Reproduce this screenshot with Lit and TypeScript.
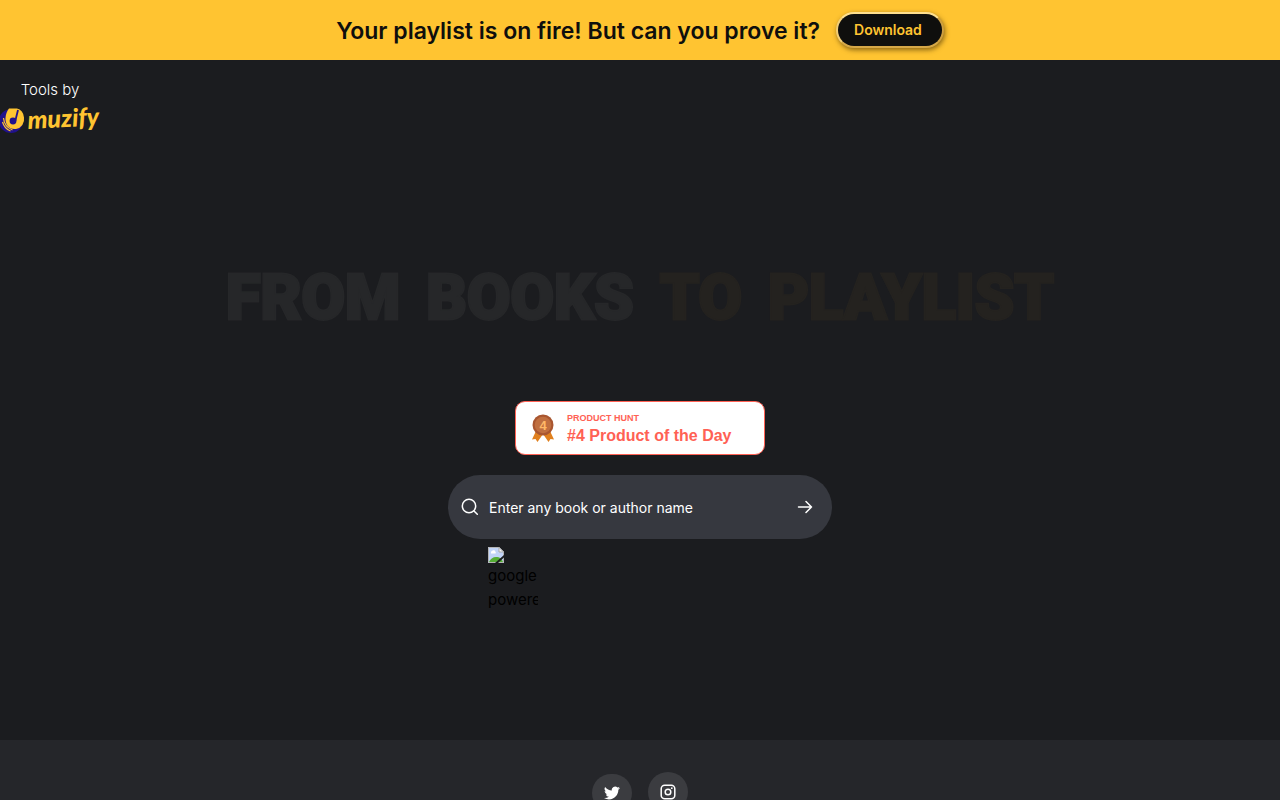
import { LitElement, html, css } from "lit";
import { customElement } from "lit/decorators.js";

@customElement("app-root")
export class AppRoot extends LitElement {
  static styles = css`
    :host {
      display: block;
      min-height: 100vh;
      background: #1b1c1f;
      color: #fff;
      font-family: Inter, "Noto Sans", sans-serif;
      font-size: 16px;
      line-height: 24px;
    }
    * { box-sizing: border-box; }
    .banner {
      display: flex;
      align-items: center;
      justify-content: center;
      gap: 16px;
      height: 60px;
      background: #ffc431;
      color: #0f0f0d;
    }
    .slogan { margin: 0; padding-top: 2px; font-size: 23px; line-height: 32px; font-weight: 600; }
    .download {
      height: 36px;
      padding: 0 20px 0 16px;
      border: 2px solid;
      border-color: #ffe08e #cfa040 #d6a847 #f3cf77;
      border-radius: 18px;
      background: #0f0f0d;
      color: #ffc431;
      box-shadow: 1px 2px 5px rgba(60, 40, 0, 0.6);
      font: 600 14px/20px Inter, sans-serif;
    }
    main { min-height: 85vh; }
    .brand {
      display: block;
      width: 100px;
      padding-top: 18px;
      color: #fff;
      text-align: center;
      text-decoration: none;
      font-size: 15px;
      font-weight: 300;
    }
    .brand span { display: block; line-height: 24px; }
    .logo { display: block; width: 100px; height: 38px; overflow: visible; }
    .wordmark {
      fill: #ffc431;
      font: italic 900 25px Lato, sans-serif;
    }
    .hero { display: flex; flex-direction: column; align-items: center; }
    h1 {
      display: flex;
      flex-wrap: wrap;
      justify-content: center;
      column-gap: 26px;
      margin: 118px 0 0;
      font: 900 63px/80px Roboto, sans-serif;
      color: #262729;
      -webkit-text-stroke: 3px currentColor;
      paint-order: stroke fill;
    }
    .warm { color: #24221f; }
    .award {
      display: flex;
      align-items: center;
      width: 250px;
      height: 54px;
      margin-top: 63px;
      padding-left: 15px;
      gap: 14px;
      border: 1px solid #ff6154;
      border-radius: 10px;
      background: #fff;
      color: #ff6154;
      font-family: "Liberation Sans", Arial, sans-serif;
      font-weight: 700;
      text-decoration: none;
    }
    .award svg { width: 24px; height: 30px; }
    .award div { margin-left: -2px; }
    .award small { display: block; font-size: 9px; line-height: 12px; padding-top: 3px; }
    .award strong { display: block; font-size: 16px; line-height: 23px; }
    .finder { width: 384px; max-width: 100%; margin-top: 20px; }
    .search {
      display: flex;
      align-items: center;
      height: 64px;
      padding: 0 16px 0 12px;
      border-radius: 32px;
      background: #36383f;
    }
    .search svg { display: block; flex: none; }
    .search input {
      flex: 1;
      min-width: 0;
      height: 40px;
      margin: 0;
      padding: 0 9px;
      border: 0;
      outline: 0;
      background: none;
      color: #fff;
      font: 14px/20px Inter, sans-serif;
    }
    .search input::placeholder { color: #fff; opacity: 1; }
    .go { padding: 0; border: 0; background: none; color: #fff; }
    .credit {
      width: 50px;
      margin: 8px 0 0 40px;
      overflow: hidden;
      color: #000;
      font-size: 15px;
    }
    .credit svg { display: block; margin-bottom: 1px; }
    .credit span { display: block; white-space: nowrap; }
    footer { background: #25262a; padding: 32px 16px 0; }
    .social {
      display: flex;
      justify-content: center;
      align-items: flex-end;
      gap: 16px;
    }
    .social a {
      display: flex;
      align-items: center;
      justify-content: center;
      width: 40px;
      height: 40px;
      border-radius: 20px;
      background: #3b3c40;
      color: #fff;
    }
    .social .bird { height: 38px; }
  `;

  render() {
    return html`
      <header class="banner">
        <p class="slogan">Your playlist is on fire! But can you prove it?</p>
        <button class="download" type="button">Download</button>
      </header>
      <main>
        <a class="brand" href="#" aria-label="Tools by muzify">
          <span>Tools by</span>
          <svg class="logo" viewBox="0 0 100 38">
            <circle cx="11" cy="19" r="12" fill="#21118c" />
            <path d="M9 6.500h8a8.500 10 0 0 1 7 9 10 10 0 0 1-8 11.500c-7 1-11-5-10.500-11 .3-4 1.500-7 3.500-9.500Z" fill="#ffc431" />
            <path d="M3.500 16c.5 6 4 10 9 12M2.500 20c1.500 5 4 7.500 8 9" fill="none" stroke="#ffc431" stroke-width="1.200" />
            <circle cx="13" cy="19" r="3.400" fill="#21118c" />
            <path d="M15.300 19 18 8" fill="none" stroke="#21118c" stroke-width="1.800" />
            <text class="wordmark" x="28" y="27" transform="rotate(-3 28 27)">muzify</text>
          </svg>
        </a>
        <section class="hero">
          <h1><span>FROM</span> <span>BOOKS</span> <span class="warm">TO</span> <span class="warm">PLAYLIST</span></h1>
          <a class="award" href="#">
            <svg viewBox="0 0 24 30">
              <path d="M5 18 1 26.500l3.500-.5 2 3 5.500-8ZM19 18l4 8.500-3.500-.5-2 3L12 21Z" fill="#e0801e" />
              <circle cx="12" cy="12" r="10.500" fill="#a95630" />
              <circle cx="12" cy="12" r="8.300" fill="#c06f40" />
              <text x="12" y="16.500" text-anchor="middle" font-size="13" font-weight="700" fill="#ffb867">4</text>
            </svg>
            <div><small>PRODUCT HUNT</small><strong>#4 Product of the Day</strong></div>
          </a>
          <div class="finder">
            <form class="search" @submit=${(e: Event) => e.preventDefault()}>
              <svg width="20" height="20" viewBox="0 0 20 20" fill="none" stroke="#fff" stroke-width="1.500" stroke-linecap="round">
                <circle cx="9" cy="9" r="6.700" /><path d="m14 14 3.300 3.300" />
              </svg>
              <input type="text" aria-label="Book or author" placeholder="Enter any book or author name" />
              <button class="go" type="submit" aria-label="Search">
                <svg width="22" height="22" viewBox="0 0 22 22" fill="none" stroke="currentColor" stroke-width="1.500" stroke-linecap="round" stroke-linejoin="round">
                  <path d="M4.500 11h13M12 5.500l5.500 5.500-5.500 5.500" />
                </svg>
              </button>
            </form>
            <div class="credit">
              <svg width="16" height="16" viewBox="0 0 16 16">
                <path d="M0 0h11l5 5v11H0Z" fill="#c2d4f8" />
                <path d="M1 15c1-3 4-5 7-5 4 0 6 2 7 5Z" fill="#55ad35" />
                <path d="M3 6a1.500 1.500 0 0 1 1-2 2 2 0 0 1 3.500 1 1 1 0 0 1 0 1.500H3Z" fill="#fff" />
                <path d="M.5 15.500V.5H11l4.500 4.500v10.500Z" fill="none" stroke="#b4b4b4" />
                <path d="M11 .5V5h4.500Z" fill="#f5f5f5" stroke="#a9a9a9" />
                <path d="M7 16 16 8v2.500L10 16Z" fill="#1b1c1f" />
              </svg>
              <span>google</span><span>powered by</span>
            </div>
          </div>
        </section>
      </main>
      <footer>
        <nav class="social" aria-label="Social">
          <a class="bird" href="#" aria-label="Twitter">
            <svg width="16" height="16" viewBox="0 0 24 24" fill="currentColor">
              <path d="M24 4.600a10 10 0 0 1-2.800.8 5 5 0 0 0 2.100-2.700 10 10 0 0 1-3.100 1.200 4.900 4.900 0 0 0-8.400 4.500A14 14 0 0 1 1.700 3.100a4.900 4.900 0 0 0 1.500 6.600 5 5 0 0 1-2.200-.6c0 2.300 1.600 4.400 3.900 4.900a5 5 0 0 1-2.200.1 4.900 4.900 0 0 0 4.600 3.400A10 10 0 0 1 0 19.500a14 14 0 0 0 7.500 2.200c9.100 0 14.300-7.700 14-14.600A10 10 0 0 0 24 4.600Z" />
            </svg>
          </a>
          <a href="#" aria-label="Instagram">
            <svg width="16" height="16" viewBox="0 0 16 16" fill="none" stroke="currentColor" stroke-width="1.500">
              <rect x="1.200" y="1.200" width="13.600" height="13.600" rx="3.500" />
              <circle cx="8" cy="8" r="2.800" /><circle cx="11.800" cy="4.200" r=".9" fill="currentColor" stroke="none" />
            </svg>
          </a>
        </nav>
      </footer>
    `;
  }
}
